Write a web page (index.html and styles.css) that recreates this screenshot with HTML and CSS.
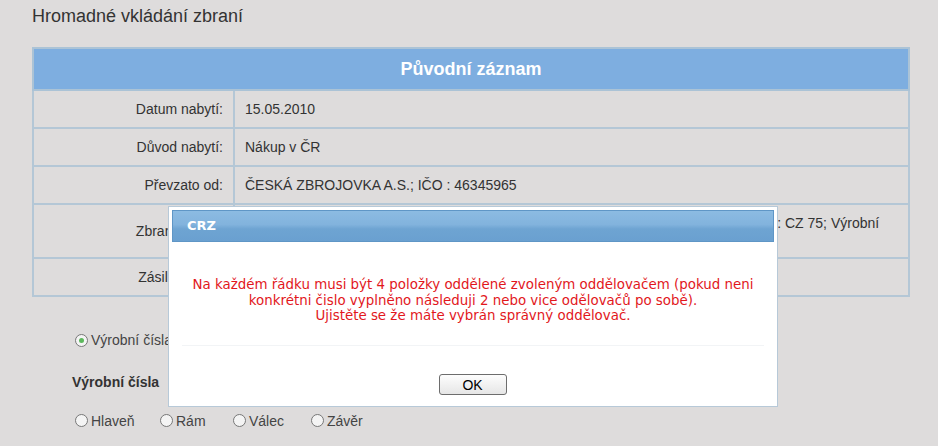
FILE: index.html
```html
<!DOCTYPE html>
<html lang="cs">
<head>
  <meta charset="UTF-8">
  <title>Hromadné vkládání zbraní</title>
  <link rel="stylesheet" href="styles.css">
</head>
<body>
  <div class="page">
    <h1 class="page-title">Hromadné vkládání zbraní</h1>

    <!-- Puvodni zaznam -->
    <table class="record">
      <tr>
        <th colspan="2">Původní záznam</th>
      </tr>
      <tr>
        <td class="label">Datum nabytí:</td>
        <td class="value">15.05.2010</td>
      </tr>
      <tr>
        <td class="label">Důvod nabytí:</td>
        <td class="value">Nákup v ČR</td>
      </tr>
      <tr>
        <td class="label">Převzato od:</td>
        <td class="value">ČESKÁ ZBROJOVKA A.S.; IČO : 46345965</td>
      </tr>
      <tr class="tall">
        <td class="label">Zbraně (typy):</td>
        <td class="value">Pistole samonabíjecí; Ráže : 9 mm Luger; Výrobce : ČESKÁ ZBROJOVKA A.S.; Vzor : CZ 75; Výrobní<br>číslo : &nbsp;</td>
      </tr>
      <tr>
        <td class="label">Zásilka číslo :</td>
        <td class="value"></td>
      </tr>
    </table>

    <div class="options">
      <label class="radio"><span class="dot checked"></span>Výrobní čísla</label>
      <p class="opt-title">Výrobní čísla</p>
      <div class="radio-row">
        <label class="radio"><span class="dot"></span>Hlaveň</label>
        <label class="radio"><span class="dot"></span>Rám</label>
        <label class="radio"><span class="dot"></span>Válec</label>
        <label class="radio"><span class="dot"></span>Závěr</label>
      </div>
    </div>
  </div>

  <!-- Alert dialog -->
  <div class="dialog">
    <div class="dialog-title">CRZ</div>
    <div class="dialog-body">
      <p>Na každém řádku musi být 4 položky oddělené zvoleným oddělovačem (pokud neni<br>
      konkrétni čislo vyplněno následuji 2 nebo vice odělovačů po sobě).<br>
      Ujistěte se že máte vybrán správný oddělovač.</p>
    </div>
    <div class="dialog-buttons">
      <button class="ok">OK</button>
    </div>
  </div>
</body>
</html>
```

FILE: styles.css
```css
/* General styling */
body {
  margin: 0;
  background-color: #dedcdc;
  font-family: 'Liberation Sans', Arial, sans-serif;
  color: #333;
  overflow: hidden;
}

.page {
  padding: 0 28px 0 32px;
}

.page-title {
  font-size: 18px;
  font-weight: normal;
  margin: 0;
  padding: 6px 0 0 0;
  height: 41px;
  color: #333;
}

/* Record table */
.record {
  width: 878px;
  border-collapse: collapse;
  border: 2px solid #abc3d6;
  font-size: 14px;
}

.record th {
  background-color: #7eaee0;
  color: #fff;
  font-size: 18px;
  font-weight: bold;
  height: 40px;
  padding: 0;
  border: 2px solid #abc3d6;
}

.record td {
  border: 2px solid #b4c7d6;
  height: 36px;
  padding: 0 10px;
}

.record tr.tall td {
  height: 44px;
}

.record td.label {
  width: 179px;
  text-align: right;
  white-space: nowrap;
}

.record td.value {
  line-height: 20px;
  white-space: nowrap;
}

.record tr.tall td.value {
  vertical-align: top;
  padding-top: 8px;
}

/* Options under table */
.options {
  padding: 35px 0 0 43px;
  font-size: 14px;
}

.radio {
  display: inline-flex;
  align-items: center;
  color: #444;
}

.dot {
  width: 11px;
  height: 11px;
  border: 1px solid #777;
  border-radius: 50%;
  margin-right: 3px;
  background: #f4f4f4;
  position: relative;
}

.dot.checked::after {
  content: "";
  position: absolute;
  left: 3px;
  top: 3px;
  width: 5px;
  height: 5px;
  border-radius: 50%;
  background: #5cb85c;
}

.opt-title {
  font-weight: bold;
  margin: 24px 0 0 -3px;
  height: 39px;
}

.radio-row {
  display: flex;
  gap: 22px;
}

.radio-row .radio:nth-child(1) { width: 63px; }
.radio-row .radio:nth-child(2) { width: 51px; }
.radio-row .radio:nth-child(3) { width: 56px; }

/* Dialog */
.dialog {
  position: absolute;
  left: 168px;
  top: 206px;
  width: 602px;
  height: 193px;
  padding: 3px;
  background: #fff;
  border: 1px solid #b7c9d8;
  display: flex;
  flex-direction: column;
}

.dialog-title {
  height: 30px;
  line-height: 30px;
  padding-left: 14px;
  color: #fff;
  font-family: 'DejaVu Sans', Tahoma, sans-serif;
  font-weight: bold;
  font-size: 13px;
  border: 1px solid #5f96c6;
  background: linear-gradient(to bottom, #8cbbe2 0%, #82b3dd 45%, #6ea4d2 60%, #6aa0d0 100%);
}

.dialog-body {
  height: 103px;
  text-align: center;
  border-bottom: 1px solid #f2f4f6;
  margin: 0 10px;
}

.dialog-body p {
  margin: 35px 0 0 0;
  color: #e2171c;
  font-family: 'DejaVu Sans', Verdana, sans-serif;
  font-size: 13.4px;
  line-height: 15.5px;
}

.dialog-buttons {
  flex: 1;
  display: flex;
  justify-content: center;
  align-items: flex-end;
  padding-bottom: 8px;
}

.ok {
  width: 68px;
  height: 21px;
  margin-right: 1px;
  font-family: 'Liberation Sans', Arial, sans-serif;
  font-size: 14px;
  color: #000;
  background: linear-gradient(to bottom, #fdfdfd, #e6e6e6);
  border: 1px solid #6d6d6d;
  border-radius: 3px;
  padding: 0;
}
```
